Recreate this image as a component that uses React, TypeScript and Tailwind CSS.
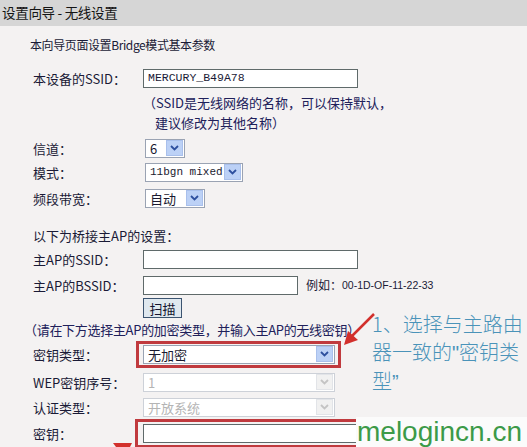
import type { ReactNode } from "react"

const cjk = { fontFamily: '"Noto Sans CJK SC", "Liberation Sans", sans-serif' }
const mono = { fontFamily: '"Liberation Mono", "Noto Sans CJK SC", monospace' }

function Chevron({ disabled }: { disabled?: boolean }) {
  return (
    <span
      className={
        disabled
          ? "flex h-[16px] w-[17px] shrink-0 items-center justify-center border border-[#e2e4e8] bg-[#f1f1f1]"
          : "flex h-[16px] w-[17px] shrink-0 items-center justify-center border border-[#a9c0ec] bg-[#bcd1f6]"
      }
    >
      <svg width="9" height="6" viewBox="0 0 9 6">
        <path
          d="M1 1 L4.5 4.5 L8 1"
          fill="none"
          stroke={disabled ? "#c4c4c4" : "#2d4f9e"}
          strokeWidth="1.8"
        />
      </svg>
    </span>
  )
}

function Select({
  value,
  width,
  disabled,
  valueMono,
}: {
  value: string
  width: string
  disabled?: boolean
  valueMono?: boolean
}) {
  return (
    <div
      className={
        "flex h-[19px] items-center justify-between whitespace-nowrap bg-white pl-[4px] pr-[1px] " +
        width +
        (disabled ? " border border-[#cdd1d8] text-[#b4b4b4]" : " border border-[#9aa3b3] text-[#1a1a30]")
      }
    >
      <span className={valueMono ? "text-[11px]" : "text-[13px]"} style={valueMono ? mono : cjk}>
        {value}
      </span>
      <Chevron disabled={disabled} />
    </div>
  )
}

function Row({ label, h, children, labelW = "w-[110px]" }: { label: string; h: string; children?: ReactNode; labelW?: string }) {
  return (
    <div className={"flex items-center pl-[33px] " + h}>
      <div className={"shrink-0 text-[13px] " + labelW}>{label}</div>
      {children}
    </div>
  )
}

export default function App() {
  return (
    <div
      className="relative h-[447px] w-[527px] overflow-hidden bg-[#f4f2f2] leading-none text-[#1a1a36]"
      style={cjk}
    >
      <div className="flex h-[26px] items-center whitespace-pre bg-[#d6d6d6] pl-[2px] text-[13.5px] tracking-[-0.3px] text-[#141414]">
        设置向导 - 无线设置
      </div>

      <div className="flex h-[38px] items-center pl-[30px] text-[12px] tracking-[-0.4px]">本向导页面设置Bridge模式基本参数</div>

      <Row label="本设备的SSID：" h="h-[28px]">
        <div className="flex h-[19px] w-[215px] items-center border border-[#5f6a6a] bg-white pl-[4px] text-[11.5px]" style={mono}>
          MERCURY_B49A78
        </div>
      </Row>

      <div className="flex h-[20px] items-center pl-[143px] text-[13px] text-[#20205a]">（SSID是无线网络的名称，可以保持默认，</div>
      <div className="flex h-[20px] items-center pl-[155px] text-[13px] text-[#20205a]">建议修改为其他名称）</div>

      <div className="h-[4px]" />
      <Row label="信道：" h="h-[24px]" labelW="w-[112px]">
        <Select value="6" width="w-[40px]" />
      </Row>
      <Row label="模式：" h="h-[24px]" labelW="w-[112px]">
        <Select value="11bgn mixed" width="w-[98px]" valueMono />
      </Row>
      <Row label="频段带宽：" h="h-[28px]" labelW="w-[112px]">
        <Select value="自动" width="w-[60px]" />
      </Row>

      <div className="h-[10px]" />
      <div className="flex h-[26px] items-center pl-[33px] text-[13px]">以下为桥接主AP的设置：</div>

      <Row label="主AP的SSID：" h="h-[22px]">
        <div className="h-[19px] w-[215px] border border-[#5f6a6a] bg-white" />
      </Row>
      <div className="h-[4px]" />
      <Row label="主AP的BSSID：" h="h-[22px]">
        <div className="h-[19px] w-[155px] border border-[#5f6a6a] bg-white" />
        <span className="ml-[8px] text-[12px]">例如：</span>
        <span className="text-[10.5px]" style={{ fontFamily: '"Liberation Sans", sans-serif' }}>
          00-1D-OF-11-22-33
        </span>
      </Row>

      <div className="h-[1px]" />
      <div className="flex h-[22px] items-center pl-[143px]">
        <button className="flex h-[20px] w-[39px] items-center justify-center border border-[#3b5470] bg-[#dfe8ef] text-[13px] text-[#14142e]">
          扫描
        </button>
      </div>

      <div className="flex h-[20px] items-center whitespace-nowrap pl-[24px] text-[13px] tracking-[-0.3px] text-[#20205a]">
        （请在下方选择主AP的加密类型，并输入主AP的无线密钥）
      </div>

      <div className="h-[2px]" />
      <Row label="密钥类型：" h="h-[26px]" labelW="w-[103px]">
        <div className="border-[3px] border-[#c03a3e] py-[1px] pl-[4px] pr-[3px]">
          <Select value="无加密" width="w-[192px]" />
        </div>
      </Row>

      <div className="h-[4px]" />
      <Row label="WEP密钥序号：" h="h-[22px]">
        <Select value="1" width="w-[192px]" disabled />
      </Row>
      <div className="h-[3px]" />
      <Row label="认证类型：" h="h-[22px]">
        <Select value="开放系统" width="w-[192px]" disabled />
      </Row>

      <Row label="密钥：" h="h-[30px]" labelW="w-[102px]">
        <div className="border-[3px] border-[#c03a3e] py-[2px] pl-[5px] pr-[3px]">
          <div className="h-[19px] w-[240px] border border-[#5f6a6a] bg-white" />
        </div>
      </Row>

      {/* annotation */}
      <svg className="absolute left-[330px] top-[300px]" width="60" height="60" viewBox="0 0 60 60">
        <path d="M44 14 L21 37" stroke="#d2302c" strokeWidth="2.5" fill="none" />
        <polygon points="14,45 18,31 28,40" fill="#d2302c" />
      </svg>
      <div className="absolute left-[372px] top-[310px] whitespace-nowrap text-[20px] font-light leading-[27.5px] text-[#4a93b9]">
        1、选择与主路由
        <br />
        器一致的<span style={{ fontFamily: '"Liberation Sans", sans-serif' }}>"</span>密钥类
        <br />型<span style={{ fontFamily: '"Liberation Sans", sans-serif' }}>”</span>
      </div>

      <svg className="absolute left-[112px] top-[443px]" width="22" height="4" viewBox="0 0 22 4">
        <polygon points="1,0 20,0 18,4 4,4" fill="#d2302c" />
      </svg>

      <div
        className="absolute left-[356px] top-[417px] flex h-[30px] w-[171px] items-center whitespace-nowrap bg-[#fbfbfb] pl-[1px] text-[28px] text-[#3c9a48]"
        style={{ fontFamily: '"Liberation Sans", sans-serif' }}
      >
        melogincn.cn
      </div>
    </div>
  )
}
